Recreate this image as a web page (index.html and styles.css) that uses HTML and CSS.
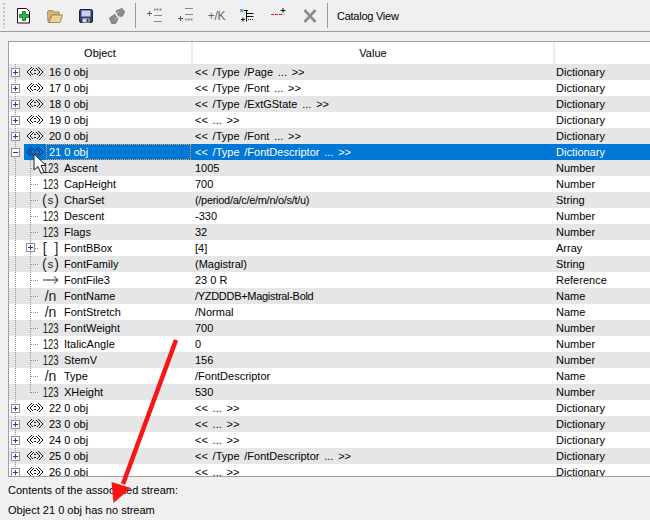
FILE: index.html
```html
<!DOCTYPE html>
<html lang="en">
<head>
<meta charset="utf-8">
<title>Catalog View</title>
<link rel="stylesheet" href="styles.css">
</head>
<body>
<svg class="defs" width="0" height="0">
  <symbol id="dict" viewBox="0 0 16 10">
    <path d="M4.500 .5l-4 4v1l4 4M6.500 1.500l-3 3v1l3 3M11.500 .5l4 4v1l-4 4M9.500 1.500l3 3v1l-3 3" fill="none" stroke="currentColor"/>
    <path d="M7 3h2v1H7zM7 6h2v1H7z" fill="currentColor"/>
  </symbol>
  <symbol id="arrowr" viewBox="0 0 16 10">
    <path d="M0 5h15M11 1.500 15 5l-4 3.500" fill="none" stroke="#222"/>
  </symbol>
</svg>
<header class="toolbar">
  <span class="grip"></span>
  <button class="tool"><svg width="16" height="16" viewBox="0 0 16 16"><path d="M1.500 .5h9l3 3v11.500h-12z" fill="#fff" stroke="#111"/><path d="M6.500 3.500h3v3h3v3h-3v3h-3v-3h-3v-3h3z" fill="#2fb24a" stroke="#0c6b22" stroke-width=".8"/></svg></button>
  <button class="tool"><svg width="16" height="16" viewBox="0 0 16 16"><path d="M1 14 .5 4l1-1.500h4L7 4h5l.5 1.500V7H4.500L2 14z" fill="#d8b878" stroke="#a58a52"/><path d="M2 14.500 5 7h10.500L13 14.500z" fill="#eccf92" stroke="#a58a52"/></svg></button>
  <button class="tool"><svg width="16" height="16" viewBox="0 0 16 16"><rect x="1.500" y="1.500" width="13" height="13" rx="1.500" fill="#39406e" stroke="#1c2040"/><path d="M3.500 2.500h9v6h-9z" fill="#c8cff0"/><path d="M4.500 10.500h7v4h-7z" fill="#dcdcdc"/><path d="M8.500 11h2v3h-2z" fill="#39406e"/></svg></button>
  <button class="tool"><svg width="16" height="16" viewBox="0 0 16 16"><path d="M7 3l6-2.500 2.500 3.500-2 4-3.500.5zM.5 10l5-3.500 3.500 4-2 4.500-4 1z" fill="#8c8c8c" stroke="#7a7a7a"/><path d="M6 6 10 3.500M6 11l5-3" stroke="#c8c8c8" fill="none"/></svg></button>
  <span class="sep"></span>
  <button class="tool"><svg width="18" height="16" viewBox="0 0 18 16"><path d="M1 5.500h5M3.500 3v5" stroke="#666" fill="none"/><path d="M8 1.500h8" stroke="#888" stroke-width="2" stroke-dasharray="1 .5" fill="none"/><path d="M8 7.500h8M8 13.500h8" stroke="#888" fill="none"/></svg></button>
  <button class="tool"><svg width="18" height="16" viewBox="0 0 18 16"><path d="M1 10.500h5M3.500 8v5" stroke="#555" fill="none"/><path d="M8 .5h8M8 6.500h8" stroke="#888" fill="none"/><path d="M8 11.500h8" stroke="#888" stroke-width="2" stroke-dasharray="1 .5" fill="none"/></svg></button>
  <button class="tool tool-text">+/K</button>
  <button class="tool"><svg width="16" height="16" viewBox="0 0 16 16"><path d="M0 1h3.500v3H0z" fill="#6aa9e8"/><path d="M4 2.500h4M6.500 2.500v11M6.500 5.500h7M6.500 8.500h7" stroke="#111" fill="none"/><path d="M8 11.500h6" stroke="#111" stroke-dasharray="1 1" fill="none"/><path d="M1 11.500h4M3 9.500v4" stroke="#111" fill="none"/></svg></button>
  <button class="tool"><svg width="18" height="16" viewBox="0 0 18 16"><path d="M1 6.500h11" stroke="#c22" stroke-dasharray="3 1" fill="none"/><path d="M12 6.500h3" stroke="#d0b0b0" fill="none"/><path d="M10.500 2.500h5M13 0v5" stroke="#111" fill="none"/></svg></button>
  <button class="tool"><svg width="16" height="16" viewBox="0 0 16 16"><path d="M2.500 2l11 12M13.500 2l-11 12" stroke="#8c8c8c" stroke-width="2.600" fill="none"/></svg></button>
  <span class="sep sep-wide"></span>
  <span class="tool-label">Catalog View</span>
</header>
<main class="main">
  <section class="panel">
    <div class="head"><div class="hc hc-obj">Object</div><div class="hc hc-val">Value</div><div class="hc-type"></div></div>
    <div class="row"><div class="tree top"><span class="exp plus"></span><svg class="ic"><use href="#dict"/></svg><span>16 0 obj</span></div><div class="val dv">&lt;&lt; /Type /Page ... &gt;&gt;</div><div class="type">Dictionary</div></div>
    <div class="row"><div class="tree top"><span class="exp plus"></span><svg class="ic"><use href="#dict"/></svg><span>17 0 obj</span></div><div class="val dv">&lt;&lt; /Type /Font ... &gt;&gt;</div><div class="type">Dictionary</div></div>
    <div class="row"><div class="tree top"><span class="exp plus"></span><svg class="ic"><use href="#dict"/></svg><span>18 0 obj</span></div><div class="val dv">&lt;&lt; /Type /ExtGState ... &gt;&gt;</div><div class="type">Dictionary</div></div>
    <div class="row"><div class="tree top"><span class="exp plus"></span><svg class="ic"><use href="#dict"/></svg><span>19 0 obj</span></div><div class="val dv">&lt;&lt; ... &gt;&gt;</div><div class="type">Dictionary</div></div>
    <div class="row"><div class="tree top"><span class="exp plus"></span><svg class="ic"><use href="#dict"/></svg><span>20 0 obj</span></div><div class="val dv">&lt;&lt; /Type /Font ... &gt;&gt;</div><div class="type">Dictionary</div></div>
    <div class="row selected"><div class="tree top"><span class="exp"></span><svg class="ic"><use href="#dict"/></svg><span class="focus">21 0 obj</span></div><div class="val dv">&lt;&lt; /Type /FontDescriptor ... &gt;&gt;</div><div class="type">Dictionary</div></div>
    <div class="row"><div class="tree kid"><span class="ty num"><b>123</b></span><span>Ascent</span></div><div class="val">1005</div><div class="type">Number</div></div>
    <div class="row"><div class="tree kid"><span class="ty num"><b>123</b></span><span>CapHeight</span></div><div class="val">700</div><div class="type">Number</div></div>
    <div class="row"><div class="tree kid"><span class="ty"><b>(<small>s</small>)</b></span><span>CharSet</span></div><div class="val tight">(/period/a/c/e/m/n/o/s/t/u)</div><div class="type">String</div></div>
    <div class="row"><div class="tree kid"><span class="ty num"><b>123</b></span><span>Descent</span></div><div class="val">-330</div><div class="type">Number</div></div>
    <div class="row"><div class="tree kid"><span class="ty num"><b>123</b></span><span>Flags</span></div><div class="val">32</div><div class="type">Number</div></div>
    <div class="row"><div class="tree kid branch"><span class="exp plus"></span><span class="ty"><b>[ &nbsp;]</b></span><span>FontBBox</span></div><div class="val">[4]</div><div class="type">Array</div></div>
    <div class="row"><div class="tree kid"><span class="ty"><b>(<small>s</small>)</b></span><span>FontFamily</span></div><div class="val">(Magistral)</div><div class="type">String</div></div>
    <div class="row"><div class="tree kid"><svg class="ic ic-ref"><use href="#arrowr"/></svg><span>FontFile3</span></div><div class="val">23 0 R</div><div class="type">Reference</div></div>
    <div class="row"><div class="tree kid"><span class="ty"><b>/n</b></span><span>FontName</span></div><div class="val tight">/YZDDDB+Magistral-Bold</div><div class="type">Name</div></div>
    <div class="row"><div class="tree kid"><span class="ty"><b>/n</b></span><span>FontStretch</span></div><div class="val">/Normal</div><div class="type">Name</div></div>
    <div class="row"><div class="tree kid"><span class="ty num"><b>123</b></span><span>FontWeight</span></div><div class="val">700</div><div class="type">Number</div></div>
    <div class="row"><div class="tree kid"><span class="ty num"><b>123</b></span><span>ItalicAngle</span></div><div class="val">0</div><div class="type">Number</div></div>
    <div class="row"><div class="tree kid"><span class="ty num"><b>123</b></span><span>StemV</span></div><div class="val">156</div><div class="type">Number</div></div>
    <div class="row"><div class="tree kid"><span class="ty"><b>/n</b></span><span>Type</span></div><div class="val">/FontDescriptor</div><div class="type">Name</div></div>
    <div class="row"><div class="tree kid last"><span class="ty num"><b>123</b></span><span>XHeight</span></div><div class="val">530</div><div class="type">Number</div></div>
    <div class="row"><div class="tree top"><span class="exp plus"></span><svg class="ic"><use href="#dict"/></svg><span>22 0 obj</span></div><div class="val dv">&lt;&lt; ... &gt;&gt;</div><div class="type">Dictionary</div></div>
    <div class="row"><div class="tree top"><span class="exp plus"></span><svg class="ic"><use href="#dict"/></svg><span>23 0 obj</span></div><div class="val dv">&lt;&lt; ... &gt;&gt;</div><div class="type">Dictionary</div></div>
    <div class="row"><div class="tree top"><span class="exp plus"></span><svg class="ic"><use href="#dict"/></svg><span>24 0 obj</span></div><div class="val dv">&lt;&lt; ... &gt;&gt;</div><div class="type">Dictionary</div></div>
    <div class="row"><div class="tree top"><span class="exp plus"></span><svg class="ic"><use href="#dict"/></svg><span>25 0 obj</span></div><div class="val dv">&lt;&lt; /Type /FontDescriptor ... &gt;&gt;</div><div class="type">Dictionary</div></div>
    <div class="row"><div class="tree top"><span class="exp plus"></span><svg class="ic"><use href="#dict"/></svg><span>26 0 obj</span></div><div class="val dv">&lt;&lt; ... &gt;&gt;</div><div class="type">Dictionary</div></div>
  </section>
  <p class="note note-first">Contents of the associated stream:</p>
  <p class="note">Object 21 0 obj has no stream</p>
</main>
<svg class="cursor" width="14" height="22" viewBox="0 0 14 22"><path d="M1 1v16l4-3.500 3 7 3-1.500-3-6.500h5z" fill="#fff" stroke="#222"/></svg>
<svg class="annot" width="90" height="170" viewBox="0 0 90 170"><path d="M78 3 25 147" stroke="#fa1414" stroke-width="4.500" fill="none"/><path d="M15.500 166 13.500 145 33 151z" fill="#fa1414"/></svg>
</body>
</html>
```

FILE: styles.css
```css
* { box-sizing: border-box; }
html, body { margin: 0; height: 100%; }
body {
  position: relative;
  width: 650px;
  height: 520px;
  overflow: hidden;
  background: #f0f0f0;
  color: #000;
  font: 11px/16px "Liberation Sans", Arial, sans-serif;
  display: flex;
  flex-direction: column;
}
.defs { position: absolute; }
.toolbar {
  height: 32px;
  flex: none;
  display: flex;
  align-items: center;
  padding-left: 3px;
  border-bottom: 1px solid #a0a0a0;
}
.grip {
  width: 2px;
  height: 25px;
  margin-right: 3px;
  background: linear-gradient(#c4c4c4 50%, transparent 50%) 0 0 / 2px 4px;
}
.tool {
  width: 31px;
  height: 24px;
  flex: none;
  border: 0;
  padding: 0;
  background: none;
  display: flex;
  align-items: center;
  justify-content: center;
  color: #666;
  font: 12px "Liberation Sans", Arial, sans-serif;
}
.tool-text { letter-spacing: -.3px; }
.sep {
  width: 1px;
  height: 25px;
  margin: 0 3px 0 3px;
  background: #9a9a9a;
}
.sep-wide { margin: 0 9px 0 2px; }
.tool-label { letter-spacing: -.25px; }
.main {
  flex: 1;
  display: flex;
  flex-direction: column;
  padding: 9px 0 0 8px;
}
.panel {
  height: 436px;
  flex: none;
  overflow: hidden;
  background: #fff;
  border-left: 1px solid #a0a0a0;
  border-top: 1px solid #a0a0a0;
  border-bottom: 1px solid #a0a0a0;
}
.head {
  height: 22px;
  display: flex;
  text-align: center;
}
.hc { padding-top: 3px; border-right: 2px solid #ececec; }
.hc-obj { width: 184px; }
.hc-val { width: 362px; }
.hc-type { flex: 1; }
.row {
  height: 16px;
  display: flex;
  white-space: nowrap;
}
.row:nth-child(even) { background: #e6e6e6; }
.tree {
  width: 182px;
  flex: none;
  display: flex;
  align-items: center;
  background-repeat: repeat-y;
  background-size: 1px 2px;
}
.top {
  padding-left: 2px;
  background-image: linear-gradient(#909090 50%, transparent 50%);
  background-position: 6px 0;
}
.kid {
  padding-left: 34px;
  position: relative;
  background-image:
    linear-gradient(#909090 50%, transparent 50%),
    linear-gradient(#909090 50%, transparent 50%);
  background-size: 1px 2px, 1px 2px;
  background-position: 6px 0, 21px 0;
  background-repeat: repeat-y, repeat-y;
}
.kid::before {
  content: "";
  position: absolute;
  left: 22px;
  top: 8px;
  width: 8px;
  height: 1px;
  background: linear-gradient(90deg, #909090 50%, transparent 50%) 0 0 / 2px 1px;
}
.last {
  background-size: 1px 2px, 1px 2px;
  background-position: 6px 0, 21px 0;
  background-repeat: repeat-y, no-repeat;
}
.last::after {
  content: "";
  position: absolute;
  left: 21px;
  top: 0;
  width: 1px;
  height: 9px;
  background: linear-gradient(#909090 50%, transparent 50%) 0 0 / 1px 2px;
}
.branch::before { left: 26px; width: 4px; }
.branch .exp { position: absolute; left: 17px; top: 3px; margin: 0; }
.exp {
  width: 9px;
  height: 9px;
  flex: none;
  margin-right: 7px;
  background: #fff linear-gradient(#2c3c8c, #2c3c8c) center / 5px 1px no-repeat;
  border: 1px solid #8e8e8e;
}
.plus {
  background:
    linear-gradient(#2c3c8c, #2c3c8c) center / 5px 1px no-repeat,
    linear-gradient(#2c3c8c, #2c3c8c) center / 1px 5px no-repeat,
    #fff;
}
.ic {
  width: 16px;
  height: 10px;
  flex: none;
  margin-right: 6px;
  color: #111;
  shape-rendering: crispEdges;
}
.ty {
  width: 15px;
  flex: none;
  margin-right: 6px;
  display: flex;
  justify-content: center;
  font: 14px/16px "Liberation Sans", sans-serif;
  color: #222;
}
.ty b { font-weight: 400; }
.ty small { font-size: 11px; margin: 0 1px; vertical-align: 1px; }
.num b { font-size: 14px; transform: scaleX(.68); }
.ic-ref { margin-right: 5px; shape-rendering: auto; }
.val { width: 361px; flex: none; padding-left: 4px; }
.dv { word-spacing: 1.7px; }
.tight { letter-spacing: -.3px; }
.type { padding-left: 4px; }
.selected { color: #fff; background: linear-gradient(90deg, #e6e6e6 15px, #0078d7 15px) !important; }
.selected .ic { color: #0b2a52; }
.selected .focus {
  flex: 1;
  height: 16px;
  margin-left: -3px;
  padding-left: 3px;
  outline: 1px dotted #f0a040;
  outline-offset: -1px;
}
.note { margin: 0; padding-top: 3px; height: 20px; }
.note-first { margin-top: 2px; }
.cursor { position: absolute; left: 33px; top: 153px; }
.annot { position: absolute; left: 98px; top: 337px; }
```
